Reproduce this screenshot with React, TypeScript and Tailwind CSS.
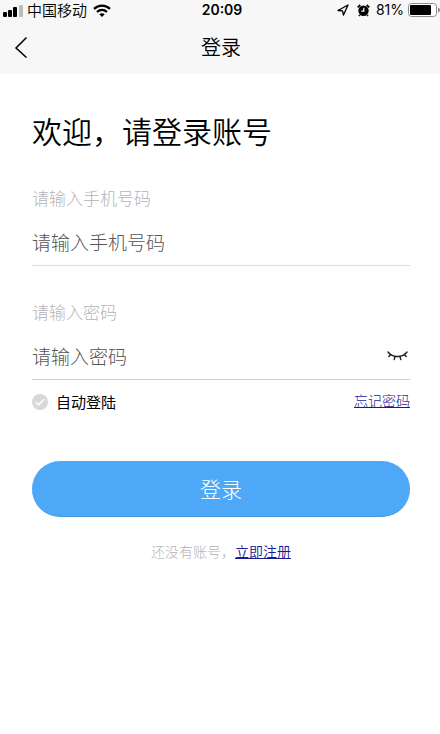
import { useState } from "react";

function StatusBar() {
  return (
    <div className="grid h-5 grid-cols-[1fr_auto_1fr] items-center text-sm leading-5 text-black">
      <div className="flex items-center pl-[3px]">
        <svg width="20" height="13" viewBox="0 0 20 13" aria-hidden="true">
          <rect x="0" y="8" width="4" height="5" rx="1" />
          <rect x="5" y="6" width="4" height="7" rx="1" />
          <rect x="10" y="3" width="4" height="10" rx="1" />
          <rect x="16" y="1" width="4" height="12" rx="1" fill="#bdbdbd" />
        </svg>
        <span className="ml-1 text-[15px] font-[350]">中国移动</span>
        <svg className="ml-1.5" width="18" height="13" viewBox="0 0 18 13" fill="none" stroke="#000" strokeWidth="2.3" aria-hidden="true">
          <path d="M1 4.8C5.5.5 12.5.5 17 4.8" />
          <path d="M4 8C7 5.300 11 5.300 14 8" />
          <path d="M9 13 6.300 10.200C7.800 8.800 10.200 8.800 11.700 10.200Z" fill="#000" stroke="none" />
        </svg>
      </div>
      <span className="pl-1 font-['Inter','Liberation_Sans',sans-serif] font-semibold">20:09</span>
      <div className="flex items-center justify-end">
        <svg width="12" height="12" viewBox="0 0 12 12" fill="none" stroke="#000" strokeWidth="1.300" strokeLinejoin="round" aria-hidden="true">
          <path d="M11 1 1 6.500 5.500 6.800 6.500 11Z" />
        </svg>
        <svg className="ml-2" width="13" height="13" viewBox="0 0 13 13" aria-hidden="true">
          <circle cx="6.500" cy="6.800" r="5.200" />
          <path d="M.7 3.300 3.300 1M12.300 3.300 9.700 1M2.800 11 2.100 12M10.200 11 10.900 12" stroke="#000" strokeWidth="1.700" />
          <path d="M6.800 3.800V7.200H4.300" fill="none" stroke="#fff" strokeWidth="1.200" />
        </svg>
        <span className="ml-1.5 font-['Inter','Liberation_Sans',sans-serif]">81%</span>
        <svg className="ml-1" width="32" height="14" viewBox="0 0 32 14" aria-hidden="true">
          <rect x=".5" y=".5" width="28" height="13" rx="3" fill="#fff" stroke="#8c8c8c" />
          <rect x="2" y="2" width="21" height="10" rx="1" />
          <path d="M30 4.500Q32 5 32 7Q32 9 30 9.500Z" fill="#8c8c8c" />
        </svg>
      </div>
    </div>
  );
}

export default function App() {
  const [visible, setVisible] = useState(false);
  const [remember, setRemember] = useState(false);

  return (
    <div className="min-h-screen bg-white font-['Noto_Sans_CJK_SC',sans-serif] text-black">
      <header className="bg-[#f7f7f7]">
        <StatusBar />
        <div className="grid h-[54px] grid-cols-[1fr_auto_1fr] items-center">
          <button type="button" aria-label="返回" className="flex h-11 w-10 items-center pl-[14px]">
            <svg width="14" height="22" viewBox="0 0 14 22" fill="none" stroke="#000" strokeWidth="1.500" aria-hidden="true">
              <path d="M12.500 1.500 2 12 12.500 21.500" />
            </svg>
          </button>
          <h1 className="pl-0.5 text-xl font-[350]">登录</h1>
        </div>
      </header>

      <main className="pr-[30px] pl-8">
        <h2 className="pt-[34px] text-[30px] leading-[44px] font-[350]">欢迎，请登录账号</h2>

        <form onSubmit={(e) => e.preventDefault()}>
          <div className="mt-[34px] border-b border-[#dcdcdc]">
            <label htmlFor="phone" className="block text-[17px] leading-6 font-light text-[#b4b4b8]">请输入手机号码</label>
            <input
              id="phone"
              type="tel"
              placeholder="请输入手机号码"
              className="mt-2 block h-[47px] w-full text-[19px] font-light outline-none placeholder:text-[#555]"
            />
          </div>

          <div className="mt-[34px] border-b border-[#cfcfcf]">
            <label htmlFor="password" className="block text-[17px] leading-6 font-light text-[#b4b4b8]">请输入密码</label>
            <div className="mt-2 flex h-[47px] items-center">
              <input
                id="password"
                type={visible ? "text" : "password"}
                placeholder="请输入密码"
                className="h-full min-w-0 flex-1 text-[19px] font-light outline-none placeholder:text-[#555]"
              />
              <button type="button" aria-label="显示密码" onClick={() => setVisible(!visible)} className="flex h-10 items-center pr-0.5">
                <svg width="21" height="11" viewBox="0 0 21 11" fill="none" stroke="#222" strokeWidth="1.400" strokeLinecap="round" aria-hidden="true">
                  <path d="M1 2C5.500 8 15.500 8 20 2M3.800 4.600 1.800 6.600M8 6.500 7.200 9.600M13 6.500 13.800 9.600M17.200 4.600 19.200 6.600" />
                </svg>
              </button>
            </div>
          </div>

          <div className="flex h-11 items-start justify-between">
            <label className="flex h-11 items-center gap-2 text-[15px]">
              <span className="grid size-4 place-items-center">
                <input
                  type="checkbox"
                  checked={remember}
                  onChange={(e) => setRemember(e.target.checked)}
                  className="col-start-1 row-start-1 size-4 appearance-none rounded-full bg-[#d8d8d8] checked:bg-[#4da9f8]"
                />
                <svg className="pointer-events-none col-start-1 row-start-1" width="10" height="8" viewBox="0 0 10 8" fill="none" stroke="#fff" strokeWidth="1.600" aria-hidden="true">
                  <path d="M.8 4 3.600 6.800 9.200 1.200" />
                </svg>
              </span>
              自动登陆
            </label>
            <a href="#forgot" className="text-sm leading-10 font-light text-[#191996] underline">忘记密码</a>
          </div>

          <button type="submit" className="mt-[37px] h-14 w-full rounded-full border-b border-[#4796dc] bg-[#4da9f8] text-[21px] font-light text-white">
            登录
          </button>
        </form>

        <p className="mt-6 text-center text-sm font-light text-[#b4b4b8]">
          还没有账号，<a href="#register" className="font-[350] text-[#191996] underline">立即注册</a>
        </p>
      </main>
    </div>
  );
}
